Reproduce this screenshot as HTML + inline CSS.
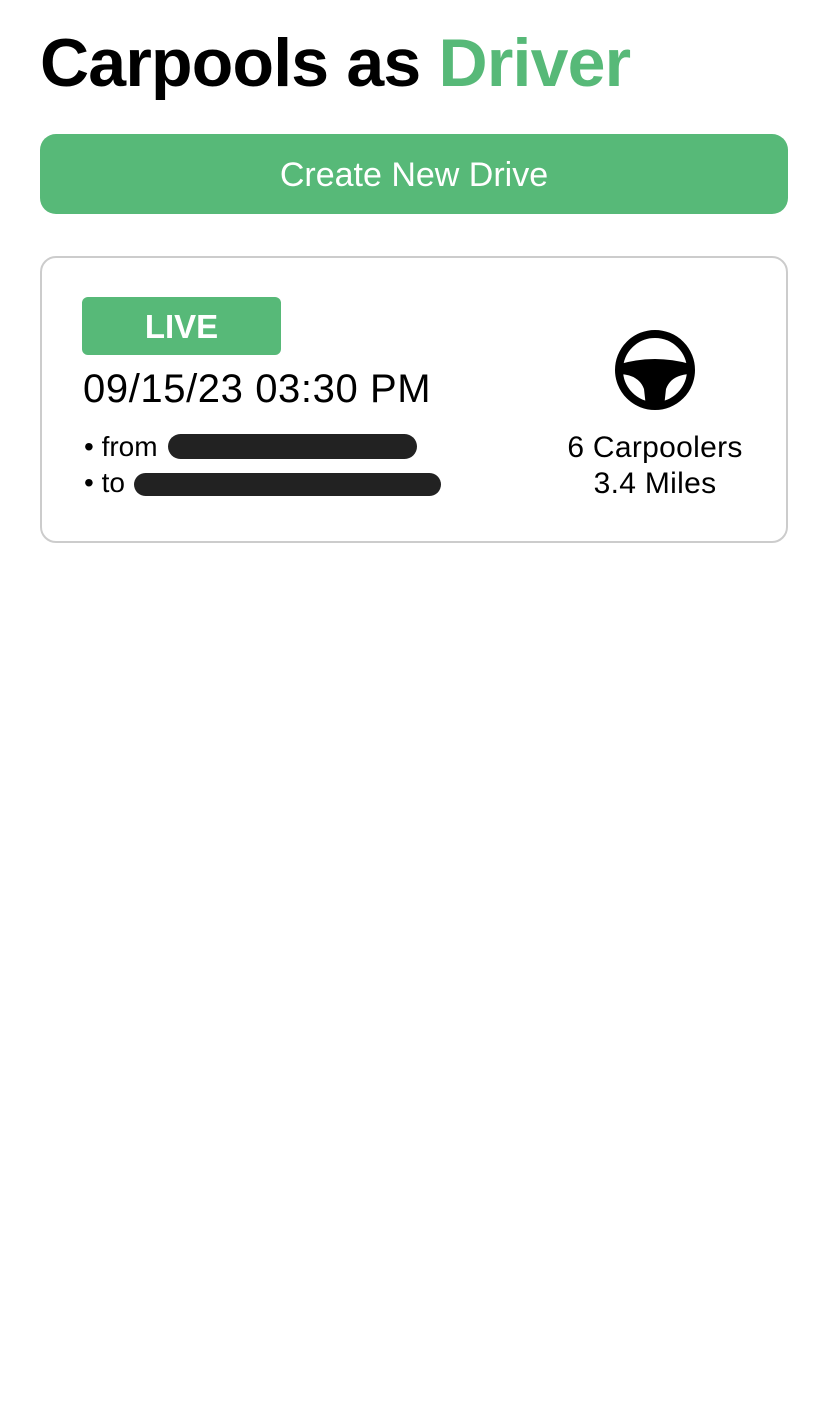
<!DOCTYPE html>
<html><head><meta charset="utf-8"><style>
body{margin:0;width:828px;height:1410px;background:#fff;font-family:"Liberation Sans",sans-serif;position:relative;overflow:hidden}
.a{position:absolute;white-space:nowrap}
</style></head><body>
<div class="a" style="left:40px;top:24px;font-size:68px;font-weight:bold;letter-spacing:-0.8px;color:#000">Carpools as <span style="color:#57b978">Driver</span></div>
<div class="a" style="left:40px;top:134px;width:748px;height:80px;background:#57b978;border-radius:16px;color:#fff;font-size:34px;text-align:center;line-height:82px">Create New Drive</div>
<div class="a" style="left:40px;top:256px;width:744px;height:283px;border:2px solid #ccc;border-radius:16px"></div>
<div class="a" style="left:82px;top:297px;width:199px;height:58px;background:#57b978;border-radius:6px;color:#fff;font-size:33px;font-weight:bold;text-align:center;line-height:60px">LIVE</div>
<div class="a" style="left:83px;top:367px;font-size:40px;letter-spacing:0.6px;color:#000">09/15/23 03:30 PM</div>
<div class="a" style="left:84px;top:431px;font-size:28px;color:#000">• from</div>
<div class="a" style="left:84px;top:467px;font-size:28px;color:#000">• to</div>
<div class="a" style="left:168px;top:434px;width:249px;height:25px;background:#222;border-radius:13px"></div>
<div class="a" style="left:134px;top:473px;width:307px;height:23px;background:#222;border-radius:12px"></div>
<svg class="a" style="left:614px;top:329px" width="82" height="82" viewBox="0 0 82 82">
<circle cx="41" cy="41" r="36" fill="none" stroke="#000" stroke-width="8"/>
<path d="M6 35 Q41 25 76 35 L76 45 Q57 46 52 60 L50 78 L32 78 L30 60 Q25 46 6 45 Z" fill="#000"/>
</svg>
<div class="a" style="left:535px;top:430px;width:240px;text-align:center;font-size:30px;letter-spacing:0.3px;line-height:36px;color:#000">6 Carpoolers<br>3.4 Miles</div>
</body></html>
